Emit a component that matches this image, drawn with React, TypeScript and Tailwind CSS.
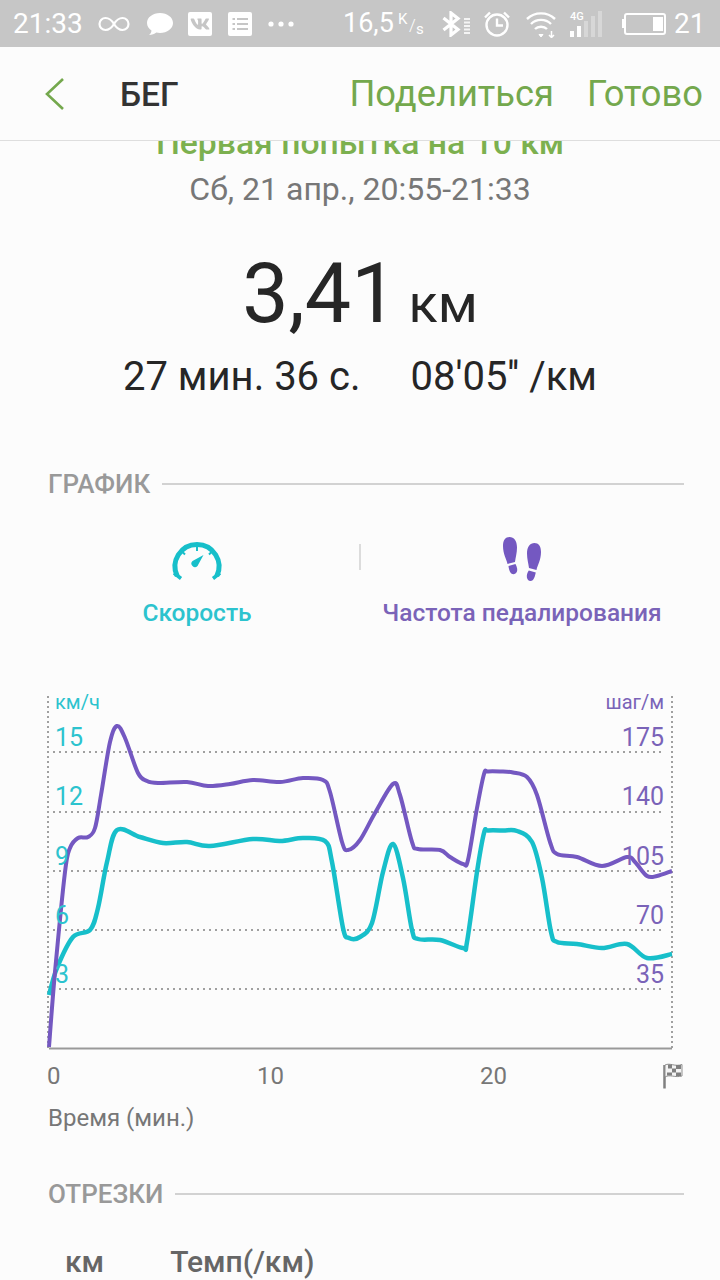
import { FaVk } from 'react-icons/fa';

type Pt = [number, number];

const cadence: Pt[] = [
  [49, 1047], [55, 972], [65, 872], [70, 848], [78, 838], [88, 837], [95, 828], [101, 795], [110, 742], [117, 726],
  [125, 738], [138, 773], [147, 781], [158, 783], [187, 782], [208, 786], [230, 784], [253, 780], [280, 782],
  [303, 778], [323, 780], [330, 792], [342, 842], [348, 850], [360, 840], [375, 813], [393, 784], [400, 795],
  [412, 842], [418, 849], [440, 850], [450, 857], [463, 864], [468, 860], [477, 808], [484, 774], [488, 771.500], [500, 771.500], [513, 772.500],
  [527, 777], [537, 795], [550, 842], [557, 854], [577, 857], [602, 866], [627, 857], [635, 862], [647, 876],
  [657, 876], [672, 871],
];

const speed: Pt[] = [
  [49, 995], [57, 968], [73, 937], [90, 930], [98, 908], [107, 862], [117, 830], [140, 837], [163, 843], [187, 842],
  [210, 846], [253, 839], [280, 841], [303, 838], [325, 841], [332, 862], [343, 928], [349, 938], [360, 937],
  [372, 923], [383, 872], [393, 844], [403, 878], [412, 930], [418, 939], [440, 940], [463, 948], [467, 942],
  [477, 872], [484, 833], [488, 830.500], [503, 830.500], [517, 831], [532, 842], [542, 878], [551, 932], [557, 942], [577, 944], [602, 948],
  [627, 944], [647, 958], [672, 954],
];

// Catmull-Rom through the samples so the lines stay rounded
function smooth(pts: Pt[]) {
  let d = `M${pts[0][0]} ${pts[0][1]}`;
  for (let i = 0; i < pts.length - 1; i++) {
    const p0 = pts[Math.max(i - 1, 0)];
    const p1 = pts[i];
    const p2 = pts[i + 1];
    const p3 = pts[Math.min(i + 2, pts.length - 1)];
    const c1x = p1[0] + (p2[0] - p0[0]) / 6;
    const c1y = p1[1] + (p2[1] - p0[1]) / 6;
    const c2x = p2[0] - (p3[0] - p1[0]) / 6;
    const c2y = p2[1] - (p3[1] - p1[1]) / 6;
    d += ` C${c1x.toFixed(1)} ${c1y.toFixed(1)} ${c2x.toFixed(1)} ${c2y.toFixed(1)} ${p2[0]} ${p2[1]}`;
  }
  return d;
}

function StatusBar() {
  return (
    <div className="flex h-[47px] items-center bg-[#c6c6c6] pl-[13px] text-white">
      <span className="w-[70px] text-[28px] leading-none">21:33</span>
      <svg className="ml-[15px] h-[20px] w-[32px]" viewBox="0 0 32 20" fill="none" stroke="white" strokeWidth="2.2">
        <path d="M16 10C13 5 10 4 7.500 4A6 6 0 0 0 7.500 16C10 16 13 15 16 10C19 5 22 4 24.500 4A6 6 0 0 1 24.500 16C22 16 19 15 16 10Z" />
      </svg>
      <svg className="ml-[16px] h-[26px] w-[28px]" viewBox="0 0 28 26" fill="white">
        <path d="M14 2C6.800 2 1 6.400 1 12C1 15 2.800 17.800 5.500 19.500C5.300 21.500 4.200 23 3 24C6 24 8.500 23 10.300 21.600C11.500 21.900 12.700 22 14 22C21.200 22 27 17.600 27 12C27 6.400 21.200 2 14 2Z" />
      </svg>
      <div className="ml-[14px] flex h-[24px] w-[24px] items-center justify-center rounded-[2px] bg-white">
        <FaVk className="h-[20px] w-[20px] text-[#c6c6c6]" />
      </div>
      <svg className="ml-[16px] h-[24px] w-[24px]" viewBox="0 0 24 24">
        <rect width="24" height="24" rx="2" fill="white" />
        <path d="M4.500 7H7M9 7H20M4.500 12H7M9 12H20M4.500 17H7M9 17H20" stroke="#c6c6c6" strokeWidth="2" />
      </svg>
      <svg className="ml-[16px] h-[6px] w-[26px]" viewBox="0 0 26 6" fill="white">
        <circle cx="3" cy="3" r="2.600" />
        <circle cx="13" cy="3" r="2.600" />
        <circle cx="23" cy="3" r="2.600" />
      </svg>
      <span className="ml-[49px] w-[51px] text-[27px] leading-none">16,5</span>
      <div className="relative ml-[3px] h-[26px] w-[28px] leading-none">
        <span className="absolute left-[1px] top-[1px] text-[15px]">K</span>
        <span className="absolute left-[12px] top-[6px] text-[17px] font-light">/</span>
        <span className="absolute left-[19px] top-[11px] text-[15px]">s</span>
      </div>
      <svg className="ml-[17px] h-[26px] w-[30px]" viewBox="0 0 30 26" fill="none" stroke="white">
        <path d="M1.500 7L16 18.500L9 24V2L16 7.500L1.500 19" strokeWidth="3.200" />
        <path d="M22 8H28M22 11.500H28M22 15H28M22 18.500H28M22 22H28" strokeWidth="1.800" opacity="0.8" />
      </svg>
      <svg className="ml-[11px] h-[28px] w-[28px]" viewBox="0 0 28 28" fill="none" stroke="white" strokeWidth="2.400">
        <circle cx="14" cy="15" r="10.500" />
        <path d="M14 8.500V15.500H20" />
        <path d="M2 7.500L7 2.500M26 7.500L21 2.500" />
      </svg>
      <svg className="ml-[14px] h-[28px] w-[32px]" viewBox="0 0 32 28" fill="none" stroke="white" strokeWidth="2.400">
        <path d="M2 9C10 1.500 22 1.500 30 9" />
        <path d="M6 14C11.500 8.500 20.500 8.500 26 14" />
        <path d="M10 19C13 16 19 16 22 19" />
        <path d="M14 24.500H18L16 27Z" fill="white" strokeWidth="1" />
        <path d="M26.500 21V27M24 25L26.500 27.500L29 25" strokeWidth="1.500" />
      </svg>
      <div className="relative ml-[13px] h-[26px] w-[37px]">
        <span className="absolute left-[0px] top-[0px] text-[11px] font-medium leading-none">4G</span>
        <div className="absolute bottom-[0px] left-[0px] flex items-end gap-[3px]">
          <div className="h-[6px] w-[4px] bg-white" />
          <div className="h-[11px] w-[4px] bg-white" />
          <div className="h-[16px] w-[4px] bg-white/30" />
          <div className="h-[21px] w-[4px] bg-white/30" />
          <div className="h-[26px] w-[4px] bg-white/30" />
        </div>
      </div>
      <div className="ml-[15px] h-[9px] w-[2px] bg-white" />
      <div className="flex h-[22px] w-[42px] items-center justify-end rounded-[3px] border-2 border-white px-[1px]">
        <div className="h-[14px] w-[10px] bg-white" />
      </div>
      <span className="ml-[8px] text-[28px] leading-none">21</span>
    </div>
  );
}

function Header() {
  return (
    <div className="relative z-10 flex h-[94px] items-center border-b border-[#dedede] bg-[#fcfcfc]">
      <svg className="ml-[44px] h-[34px] w-[22px]" viewBox="0 0 22 34" fill="none" stroke="#74a84d" strokeWidth="2.600">
        <path d="M19 2L3 17L19 32" />
      </svg>
      <span className="ml-[54px] mt-[2px] text-[33.500px] font-medium leading-none text-[#333]">БЕГ</span>
      <span className="ml-auto mt-[2px] text-[36.300px] leading-none text-[#74a84d]">Поделиться</span>
      <span className="ml-[33px] mr-[17px] mt-[2px] text-[36.300px] leading-none text-[#74a84d]">Готово</span>
    </div>
  );
}

function SectionTitle({ label }: { label: string }) {
  return (
    <div className="flex items-center gap-[12px] pl-[48px] pr-[36px]">
      <span className="text-[26px] font-medium leading-none text-[#999]">{label}</span>
      <div className="h-[2px] flex-1 bg-[#d2d2d2]" />
    </div>
  );
}

function Chart() {
  return (
    <div className="relative mt-[51px] h-[372px] text-[25px] leading-none">
      <svg className="absolute inset-0 h-full w-full" viewBox="0 690 720 372" fill="none">
        {[752, 812, 871, 930, 989].map((y) => (
          <path key={y} d={`M53 ${y}H664`} stroke="#a0a0a0" strokeWidth="2" strokeDasharray="2 4" />
        ))}
        <path d="M48 696V1048M672 696V1048" stroke="#a0a0a0" strokeWidth="2" strokeDasharray="2 3" />
        <path d="M49 1048.500H672" stroke="#999" strokeWidth="2" />
        <path d={smooth(speed)} stroke="#17bfca" strokeWidth="4.500" strokeLinejoin="round" />
        <path d={smooth(cadence)} stroke="#7458c1" strokeWidth="4" strokeLinejoin="round" />
      </svg>
      <div className="text-[#2cc3ce]">
        <span className="absolute left-[55px] top-[2px] text-[20px]">км/ч</span>
        <span className="absolute left-[55px] top-[35px]">15</span>
        <span className="absolute left-[55px] top-[94px]">12</span>
        <span className="absolute left-[55px] top-[154px]">9</span>
        <span className="absolute left-[55px] top-[213px]">6</span>
        <span className="absolute left-[55px] top-[272px]">3</span>
      </div>
      <div className="text-[#7a63b8]">
        <span className="absolute right-[56px] top-[2px] text-[20px]">шаг/м</span>
        <span className="absolute right-[56px] top-[35px]">175</span>
        <span className="absolute right-[56px] top-[94px]">140</span>
        <span className="absolute right-[56px] top-[154px]">105</span>
        <span className="absolute right-[56px] top-[213px]">70</span>
        <span className="absolute right-[56px] top-[272px]">35</span>
      </div>
    </div>
  );
}

function TimeAxis() {
  return (
    <div className="relative h-[30px] text-[24px] leading-none text-[#777]">
      <span className="absolute left-[47px] top-[2px]">0</span>
      <span className="absolute left-[257px] top-[2px]">10</span>
      <span className="absolute left-[480px] top-[2px]">20</span>
      {/* finish flag */}
      <svg className="absolute left-[662px] top-[0px] h-[28px] w-[22px]" viewBox="662 1062 22 28" fill="none">
        <path d="M664.500 1065V1088.500" stroke="#808080" strokeWidth="2.500" />
        <path d="M665 1065C670 1062.500 675 1067 682 1064.500V1076C675 1078 670 1074 665 1077Z" fill="#f4f4f4" stroke="#909090" strokeWidth="1" />
        <path d="M668 1064.500H672V1068.500H668ZM676 1065H681V1069H676ZM672 1068.500H676V1072.500H672ZM667 1072.500H672V1075.500H667ZM676 1072.500H681V1076H676Z" fill="#808080" />
      </svg>
    </div>
  );
}

export default function App() {
  return (
    <div className="flex h-[1280px] w-[720px] flex-col overflow-hidden bg-[#fcfcfc] font-['Roboto',sans-serif]">
      <StatusBar />
      <Header />
      <div className="-mt-[15px] flex flex-col">
        <div className="text-center text-[33.700px] font-medium leading-none text-[#7cb04f]">Первая попытка на 10 км</div>
        <div className="mt-[13px] text-center text-[32px] leading-none text-[#777]">Сб, 21 апр., 20:55-21:33</div>
        <div className="mt-[48px] flex items-baseline justify-center gap-[11px] text-[#262626]">
          <span className="text-[82.500px] leading-none">3,41</span>
          <span className="text-[54px] leading-none">км</span>
        </div>
        <div className="mt-[22px] flex justify-center gap-[50px] text-[40px] leading-none text-[#262626]">
          <span>27 мин. 36 с.</span>
          <span>08'05'' /км</span>
        </div>
        <div className="mt-[74px]">
          <SectionTitle label="ГРАФИК" />
        </div>
        <div className="relative mt-[42px] flex h-[100px]">
          <div className="flex w-[394px] flex-col items-center">
            {/* speedometer */}
            <svg className="h-[44px] w-[56px]" viewBox="169.500 539 56 44" fill="none" stroke="#17bfca">
              <path d="M177.700 576A22 22 0 1 1 217.300 576" strokeWidth="5" />
              <path d="M174.500 573L181.500 578.500M220.500 573L213.500 578.500" strokeWidth="3.500" />
              <path d="M197.500 546.500V551M182 551L185.500 554.500M213 551L209.500 554.500" strokeWidth="2" />
              <path d="M193 561L204 555L198 566A3.500 3.500 0 0 1 193 561Z" fill="#17bfca" stroke="none" />
            </svg>
            <span className="mt-[18px] text-[24.500px] font-medium leading-none text-[#2cc3ce]">Скорость</span>
          </div>
          <div className="absolute left-[359px] top-[5px] h-[26px] w-[2px] bg-[#dcdcdc]" />
          <div className="-ml-[52px] flex w-[360px] flex-col items-center">
            {/* pair of footprints */}
            <svg className="-mt-[4px] h-[48px] w-[44px]" viewBox="500 535 44 48" fill="#7458c1">
              <path d="M509.500 537C514 537 517 541 517 547.500C517 553 515.500 558 515 562L507.500 564C506.500 559 503 554 503 546C503 540 505.500 537 509.500 537Z" />
              <path d="M508.500 566L515.500 564C517 567 518.500 571 515.500 573.500C512 576 509 572 508.500 566Z" />
              <path d="M534.500 543C530 543 527 547 527 553.500C527 559 528.500 564 529 568L536.500 570C537.500 565 541 560 541 552C541 546 538.500 543 534.500 543Z" />
              <path d="M528.800 570.500L535.800 572.500C535 576 534 581 530.500 581C526.500 581 525.500 575 528.800 570.500Z" />
            </svg>
            <span className="mt-[18px] text-[24.500px] font-medium leading-none text-[#7a63b8]">Частота педалирования</span>
          </div>
        </div>
        <Chart />
        <TimeAxis />
        <div className="ml-[48px] mt-[14px] text-[24px] leading-none text-[#777]">Время (мин.)</div>
        <div className="mt-[51px]">
          <SectionTitle label="ОТРЕЗКИ" />
        </div>
        <div className="ml-[65px] mt-[40px] flex gap-[66px] text-[30px] font-medium leading-none text-[#666]">
          <span>км</span>
          <span>Темп(/км)</span>
        </div>
      </div>
    </div>
  );
}
